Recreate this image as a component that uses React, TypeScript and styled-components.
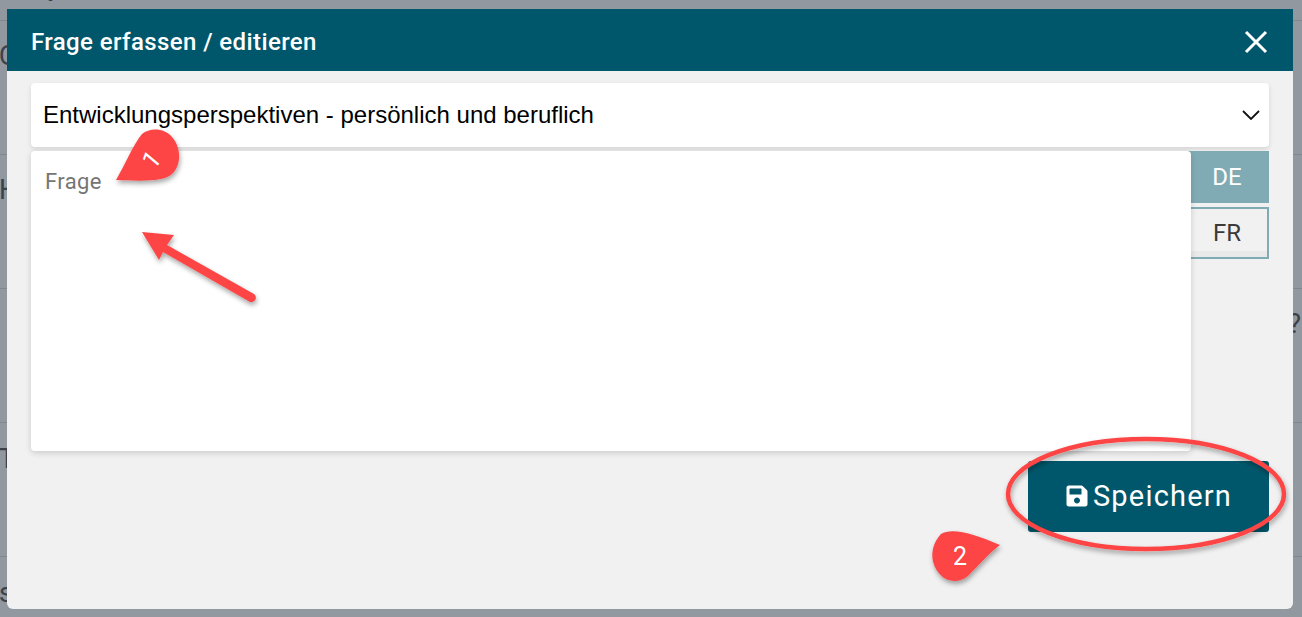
import React from 'react'
import styled, { createGlobalStyle } from 'styled-components'
import { FaSave } from 'react-icons/fa'

const Global = createGlobalStyle`
  html, body { margin: 0; padding: 0; height: 100%; overflow: hidden; }
  body { font-family: Roboto, "Liberation Sans", sans-serif; background: #91989f; }
`

const rows = [
  { text: 'Q', pad: 19 },
  { text: 'Hi', pad: 19 },
  { text: '?', pad: 19, right: true },
  { text: 'T', pad: 20 },
  { text: 's', pad: 20 },
]

const App = () => {
  return (
    <Page>
      <Global />
      <Backdrop>
        <TopRow>
          <Heading>Top</Heading>
        </TopRow>
        {rows.map((r) => (
          <Row key={r.text} $right={r.right} $pad={r.pad}>
            <RowText>{r.text}</RowText>
          </Row>
        ))}
      </Backdrop>
      <Modal>
        <Header>
          <Title>Frage erfassen / editieren</Title>
          <CloseIcon viewBox="0 0 24 24">
            <path d="M2 2 L22 22 M22 2 L2 22" />
          </CloseIcon>
        </Header>
        <Body>
          <Select>
            <span>Entwicklungsperspektiven - persönlich und beruflich</span>
            <Chevron viewBox="0 0 18 10">
              <path d="M1 1 L9 9 L17 1" />
            </Chevron>
          </Select>
          <Editor>
            <TextBox>Frage</TextBox>
            <Tabs>
              <Tab $active>DE</Tab>
              <Tab>FR</Tab>
            </Tabs>
          </Editor>
          <Footer>
            <SaveButton>
              <FaSave size={24} />
              Speichern
            </SaveButton>
          </Footer>
        </Body>
      </Modal>
      <Annotations viewBox="0 0 1302 617">
        <defs>
          <filter id="sh" x="-30%" y="-30%" width="160%" height="160%">
            <feDropShadow dx="1" dy="3" stdDeviation="2.5" floodColor="#000" floodOpacity="0.35" />
          </filter>
        </defs>
        <g filter="url(#sh)">
          <path
            d="M116 180 C125 165 134 143 142 134 C150 127 165 128 172 137 C181 147 182 165 172 174 C164 182 140 181 116 180 Z"
            fill="#fd4545"
          />
          <path
            d="M142 232 L174 235 L167 245 L254 294 C258 297 255 303 250 302 L163 252 L159 260 Z"
            fill="#fd4545"
          />
          <path
            d="M1000 545 C990 552 978 566 968 576 C958 584 945 582 938 572 C930 561 930 546 941 534 C952 527 975 534 1000 545 Z"
            fill="#fd4545"
          />
          <ellipse cx="1146" cy="494" rx="138" ry="55" fill="none" stroke="#fd4545" strokeWidth="4.5" />
        </g>
        <Digit x="152" y="168" transform="rotate(-50 152 160)">1</Digit>
        <Digit x="960" y="565">2</Digit>
      </Annotations>
    </Page>
  )
}

export default App

const Page = styled.div`
  position: relative;
  width: 1302px;
  height: 617px;
  overflow: hidden;
`

const Backdrop = styled.div`
  display: flex;
  flex-direction: column;
  color: #3c4249;
`

const TopRow = styled.div`
  height: 44px;
  border-bottom: 1px solid #80878e;
  margin-top: -24px;
  padding-left: 21px;
`

const Heading = styled.div`
  font-size: 24px;
  font-weight: 700;
  line-height: 24px;
`

const Row = styled.div<{ $right?: boolean; $pad: number }>`
  height: 133px;
  border-bottom: 1px solid #80878e;
  display: flex;
  justify-content: ${(p) => (p.$right ? 'flex-end' : 'flex-start')};
  padding: 0 1px;
  & > span {
    margin-top: ${(p) => p.$pad}px;
  }
`

const RowText = styled.span`
  font-size: 27px;
  line-height: 32px;
  height: 32px;
  margin-left: -2px;
`

const Modal = styled.div`
  position: absolute;
  left: 7px;
  top: 9px;
  width: 1286px;
  height: 600px;
  background: #f1f1f1;
  border-radius: 0 0 6px 6px;
  display: flex;
  flex-direction: column;
`

const Header = styled.div`
  height: 62px;
  box-sizing: border-box;
  flex: none;
  background: #00576b;
  color: #fff;
  display: flex;
  align-items: center;
  justify-content: space-between;
  padding: 3px 25px 0 24px;
`

const Title = styled.div`
  font-size: 24px;
  font-weight: 500;
  letter-spacing: 0.4px;
`

const CloseIcon = styled.svg`
  width: 24px;
  height: 24px;
  fill: none;
  stroke: #fff;
  stroke-width: 3;
`

const Body = styled.div`
  display: flex;
  flex-direction: column;
  padding: 12px 24px 0;
`

const Select = styled.div`
  height: 64px;
  background: #fff;
  border-radius: 4px;
  box-shadow: 0 2px 5px rgba(0, 0, 0, 0.12);
  display: flex;
  align-items: center;
  justify-content: space-between;
  padding: 0 9px 0 12px;
  font-family: 'Liberation Sans', Arial, sans-serif;
  font-size: 24px;
  color: #000;
`

const Chevron = styled.svg`
  width: 18px;
  height: 10px;
  fill: none;
  stroke: #111;
  stroke-width: 1.8;
`

const Editor = styled.div`
  display: flex;
  margin-top: 4px;
`

const TextBox = styled.div`
  width: 1160px;
  height: 300px;
  box-sizing: border-box;
  background: #fff;
  border-radius: 4px;
  box-shadow: 0 2px 6px rgba(0, 0, 0, 0.16);
  padding: 19px 14px;
  font-size: 22px;
  line-height: 24px;
  letter-spacing: 0.4px;
  color: #757575;
  position: relative;
  z-index: 1;
`

const Tabs = styled.div`
  width: 84px;
  margin-left: -6px;
  display: flex;
  flex-direction: column;
  gap: 4px;
`

const Tab = styled.div<{ $active?: boolean }>`
  height: 52px;
  box-sizing: border-box;
  display: flex;
  align-items: center;
  justify-content: center;
  font-size: 24px;
  color: ${(p) => (p.$active ? '#fff' : '#3a3a3a')};
  background: ${(p) => (p.$active ? '#80abb5' : '#f1f1f1')};
  border: ${(p) => (p.$active ? 'none' : '2px solid #80abb5')};
  box-shadow: ${(p) => (p.$active ? 'none' : 'inset 0 -6px 0 #e9e9e9')};
`

const Footer = styled.div`
  display: flex;
  justify-content: flex-end;
  margin-top: 10px;
`

const SaveButton = styled.div`
  width: 241px;
  height: 71px;
  box-sizing: border-box;
  padding-bottom: 2px;
  background: #00576b;
  border-radius: 3px;
  color: #fff;
  display: flex;
  align-items: center;
  justify-content: center;
  gap: 4px;
  font-size: 29px;
  letter-spacing: 1.2px;
`

const Annotations = styled.svg`
  position: absolute;
  inset: 0;
  z-index: 2;
  width: 1302px;
  height: 617px;
  pointer-events: none;
`

const Digit = styled.text`
  font-family: Roboto, sans-serif;
  font-size: 25px;
  fill: #fff;
  text-anchor: middle;
`
